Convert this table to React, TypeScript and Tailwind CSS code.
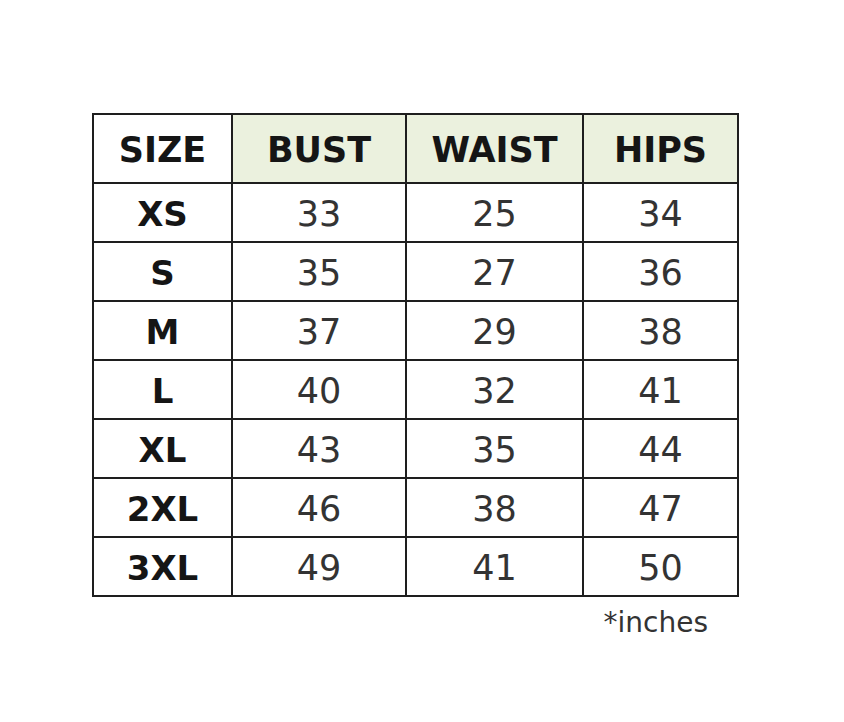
import React from "react";

const rows = [
  ["XS", "33", "25", "34"],
  ["S", "35", "27", "36"],
  ["M", "37", "29", "38"],
  ["L", "40", "32", "41"],
  ["XL", "43", "35", "44"],
  ["2XL", "46", "38", "47"],
  ["3XL", "49", "41", "50"],
];

const headers = ["SIZE", "BUST", "WAIST", "HIPS"];

export default function App() {
  return (
    <div className="min-h-[722px] w-[844px] bg-white pt-[113px] pl-[92px] font-['DejaVu_Sans',Verdana,sans-serif]">
      <div className="w-[647px]">
        {/* size table */}
        <div className="grid grid-cols-[139px_174px_177px_155px] border-l-2 border-t-2 border-[#1e1e1e]">
          {headers.map((h, i) => (
            <div
              key={h}
              className={`flex h-[69px] items-center justify-center border-b-2 border-r-2 border-[#1e1e1e] pt-[3px] text-[35px] font-bold text-[#151515] ${
                i === 0 ? "bg-white" : "bg-[#ebf1de]"
              }`}
            >
              {h}
            </div>
          ))}
          {rows.map((r) =>
            r.map((c, i) => (
              <div
                key={r[0] + i}
                className={`flex h-[59px] items-center justify-center border-b-2 border-r-2 border-[#1e1e1e] pt-[3px] ${
                  i === 0
                    ? "text-[34px] font-bold text-[#151515]"
                    : "text-[35px] text-[#333333]"
                }`}
              >
                {c}
              </div>
            ))
          )}
        </div>

        {/* unit note */}
        <div className="mt-[12px] pr-[31px] text-right text-[28px] leading-none text-[#333333]">
          *inches
        </div>
      </div>
    </div>
  );
}
